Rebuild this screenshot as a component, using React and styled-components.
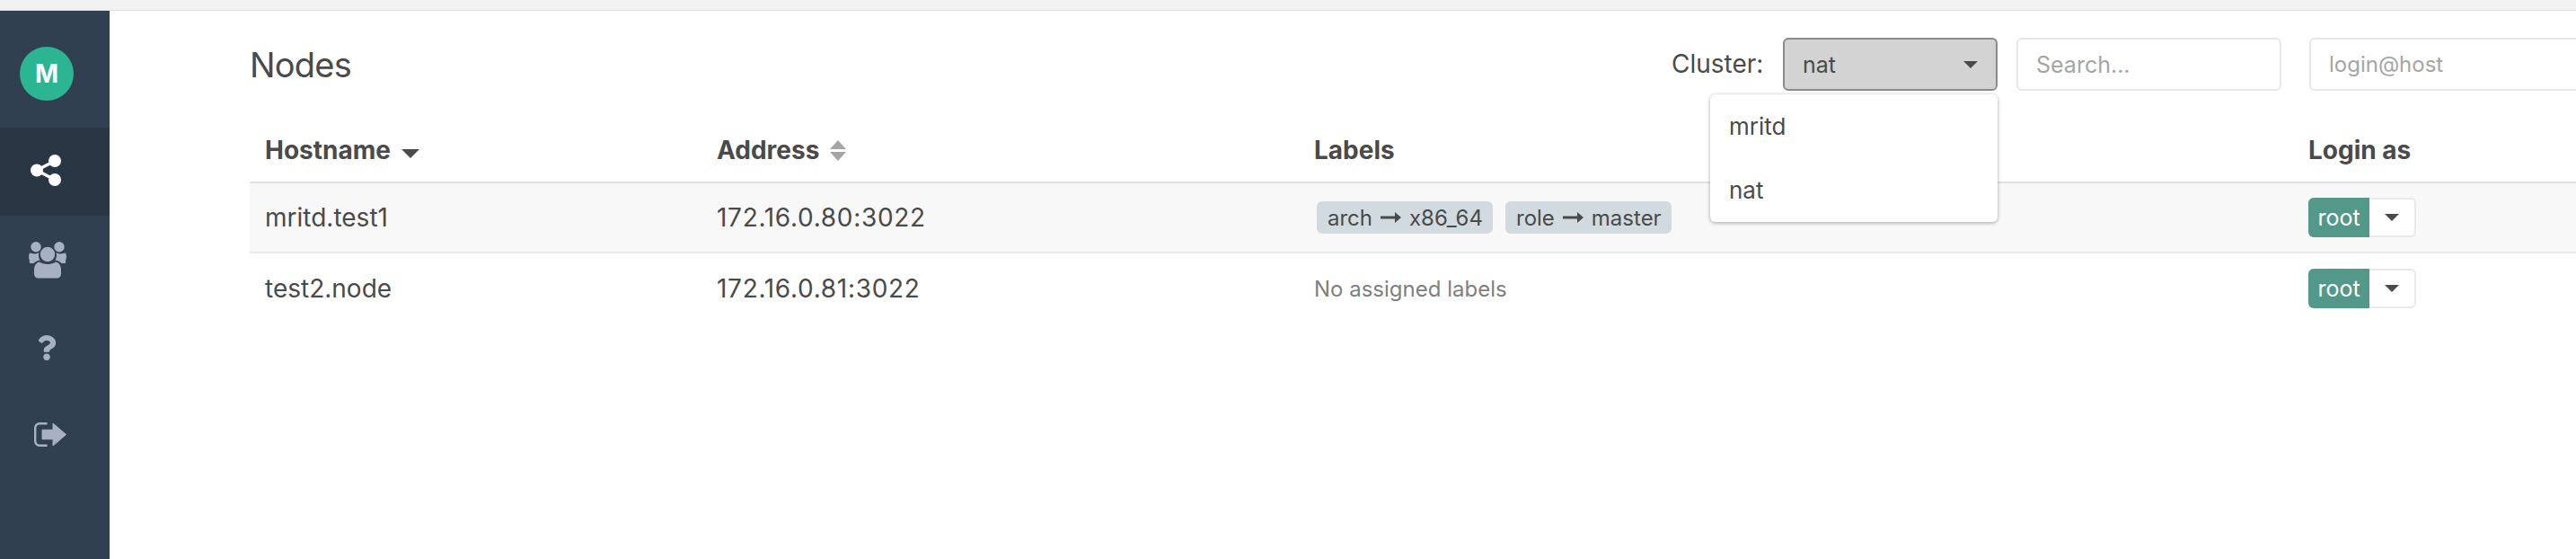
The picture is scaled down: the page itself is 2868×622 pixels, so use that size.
import React from 'react';
import styled, { createGlobalStyle } from 'styled-components';
import { FaQuestion } from 'react-icons/fa';

const Global = createGlobalStyle`
  html, body { margin: 0; padding: 0; background: #fff; }
  body { font-family: Inter, "Liberation Sans", sans-serif; color: #4a4a4a; overflow: hidden; }
  * { box-sizing: border-box; }
`;
const Page = styled.div`width: 2868px; height: 622px; display: flex; flex-direction: column; overflow: hidden;`;
const TopStrip = styled.div`height: 12px; flex: none; background: #f2f2f2; border-bottom: 1px solid #dcdcdc;`;
const Body = styled.div`flex: 1; display: flex; min-height: 0;`;
const Sidebar = styled.nav`width: 122px; flex: none; background: #304050;`;
const AvatarBox = styled.div`height: 130px; padding: 40px 0 0 22px;`;
const Avatar = styled.div`
  width: 60px; height: 60px; border-radius: 50%; background: #2bb593; color: #fff;
  display: flex; align-items: center; justify-content: center; font-weight: 700; font-size: 28px;
`;
const NavItem = styled.div`
  height: 98px; padding-left: 22px; display: flex; align-items: center;
  background: ${p => (p.$active ? '#293745' : 'transparent')};
  color: ${p => (p.$active ? '#fff' : '#a7b1c2')};
`;
const IconSlot = styled.div`
  width: ${p => p.$w || 60}px; margin-bottom: ${p => p.$up || 0}px;
  display: flex; justify-content: center;
`;
const Main = styled.main`flex: 1; min-width: 0; padding: 30px 0 0 156px;`;
const Header = styled.header`display: flex; align-items: flex-start; height: 90px;`;
const Title = styled.h1`margin: 7px 0 0; font-size: 38px; line-height: 46px; font-weight: 400; letter-spacing: -0.8px; flex: none; width: 1583px;`;
const ClusterLabel = styled.span`font-size: 28px; line-height: 59px; width: 124px; flex: none;`;
const ClusterWrap = styled.div`position: relative; flex: none; width: 239px; margin-right: 21px;`;
const Select = styled.div`
  height: 59px; background: #d3d3d3; border: 2px solid #8b8b8b; border-radius: 6px;
  display: flex; align-items: center; justify-content: space-between; padding: 0 20px 0 20px; font-size: 25px;
`;
const Caret = styled.i`
  display: inline-block; width: 0; height: 0;
  border-left: ${p => p.$s}px solid transparent; border-right: ${p => p.$s}px solid transparent;
  border-top: ${p => p.$s}px solid ${p => p.$c || '#4a4a4a'};
`;
const Menu = styled.div`
  position: absolute; top: 63px; right: 0; width: 320px; height: 142px; background: #fff;
  border-radius: 6px; box-shadow: 0 1px 4px rgba(0,0,0,.35); padding-left: 21px; z-index: 2;
  font-size: 26px;
`;
const MenuItem = styled.div`height: 71px; display: flex; align-items: center;`;
const Input = styled.div`
  flex: none; width: ${p => p.$w}px; height: 59px; margin-right: ${p => p.$mr || 0}px;
  border: 2px solid #e7e7e7; border-radius: 6px; padding-left: 20px; display: flex; align-items: center;
  font-size: ${p => p.$fs || 25}px; color: #a5a5a5; background: #fff;
`;
const Row = styled.div`
  display: grid; grid-template-columns: 503px 665px 1107px 1fr; align-items: center;
  height: ${p => p.$h}px; background: ${p => p.$bg || 'transparent'};
  border-bottom: ${p => (p.$line ? `2px solid ${p.$line}` : 'none')};
`;
const Th = styled.div`padding-left: 17px; font-size: 28px; font-weight: 700; display: flex; align-items: center; gap: 12px;`;
const Td = styled.div`padding-left: 17px; font-size: 28px; letter-spacing: ${p => (p.$num ? '0.7px' : '0')}; display: flex; align-items: center; gap: 14px;`;
const Chip = styled.span`
  height: 36px; border-radius: 6px; background: #d1dade; padding: 0 11px 0 12px;
  display: inline-flex; align-items: center; gap: 9px; font-size: 24px;
  margin-left: 3px; & + & { margin-left: 0; }
`;
const Muted = styled.span`font-size: 24px; color: #7f7f7f;`;
const LoginGroup = styled.div`display: flex; height: 44px;`;
const RootBtn = styled.div`
  width: 68px; background: #52998a; color: #fff; font-size: 25px; font-weight: 400;
  border-radius: 6px 0 0 6px; display: flex; align-items: center; justify-content: center;
`;
const DropBtn = styled.div`
  width: 52px; background: #fff; border: 2px solid #e7eaec; border-left: 0;
  border-radius: 0 6px 6px 0; display: flex; align-items: center; justify-content: center;
`;
const SortIcon = styled.svg`display: block; margin-top: ${p => p.$mt || 0}px;`;

const Share = () => (
  <svg width="34" height="35" viewBox="0 0 34 35" fill="currentColor">
    <path d="M7 17.500L27 7M7 17.500L27 28" stroke="currentColor" strokeWidth="3.500" fill="none" />
    <circle cx="7" cy="17.500" r="7" /><circle cx="27" cy="7" r="7" /><circle cx="27" cy="28" r="7" />
  </svg>
);
const Shoulder = 'M1 21C0 19-.5 15 1 12.500C3 12.500 5 13.500 7 13.500C9 13.500 10 12.500 11.500 12C10.500 15 11 18 12.500 20.500C9 21 6.500 23 5.500 24H3A2 2 0 0 1 1 21z';
const Users = () => (
  <svg width="43" height="41" viewBox="0 0 43 41" fill="currentColor">
    <circle cx="8" cy="5.700" r="5.700" /><circle cx="34" cy="5.700" r="5.700" />
    <path d={Shoulder} />
    <path d={Shoulder} transform="matrix(-1 0 0 1 42 0)" />
    <circle cx="21" cy="14" r="8.800" stroke="#304050" strokeWidth="1.200" />
    <path d="M6 36V31C6 26 9 23 12 22.500C14 24 17.500 25 21 25C24.500 25 28 24 30 22.500C33 23 36 26 36 31V36A4.500 4.500 0 0 1 31.500 40.500H10.500A4.500 4.500 0 0 1 6 36z" />
  </svg>
);
const SignOut = () => (
  <svg width="36" height="27" viewBox="0 0 36 27" fill="currentColor">
    <path d="M14.500 1.200H6A4.800 4.800 0 0 0 1.200 6V21A4.800 4.800 0 0 0 6 25.800H14.500" fill="none" stroke="currentColor" strokeWidth="2.400" />
    <path d="M9 8.300H21V1L35.500 13.500L21 26V18.700H9z" stroke="currentColor" strokeWidth="1" strokeLinejoin="round" />
  </svg>
);
const Arrow = () => (
  <svg width="23" height="12" viewBox="0 0 23 12" fill="#4a4a4a"><path d="M0 4.500h16V0l7 6-7 6V7.500H0z" /></svg>
);
const SortBoth = () => (
  <SortIcon width="18" height="23" viewBox="0 0 18 23" fill="#a5a5a5"><path d="M9 0l9 10H0zM0 13h18l-9 10z" /></SortIcon>
);

const LoginAs = () => (
  <LoginGroup>
    <RootBtn>root</RootBtn>
    <DropBtn><Caret $s={8} /></DropBtn>
  </LoginGroup>
);

export default function App() {
  return (
    <Page>
      <Global />
      <TopStrip />
      <Body>
        <Sidebar>
          <AvatarBox><Avatar>M</Avatar></AvatarBox>
          <NavItem $active><IconSlot $w={58} $up={3}><Share /></IconSlot></NavItem>
          <NavItem><IconSlot $w={63}><Users /></IconSlot></NavItem>
          <NavItem><IconSlot $w={59}><FaQuestion size={28} /></IconSlot></NavItem>
          <NavItem><IconSlot $w={68} $up={3}><SignOut /></IconSlot></NavItem>
        </Sidebar>
        <Main>
          <Header>
            <Title>Nodes</Title>
            <ClusterLabel>Cluster:</ClusterLabel>
            <ClusterWrap>
              <Select>nat<Caret $s={8} /></Select>
              <Menu>
                <MenuItem>mritd</MenuItem>
                <MenuItem>nat</MenuItem>
              </Menu>
            </ClusterWrap>
            <Input $w={295} $mr={31}>Search...</Input>
            <Input $w={400} $fs={24}>login@host</Input>
          </Header>
          <Row $h={72} $line="#e0e0e0">
            <Th>Hostname <SortIcon $mt={8} width="20" height="10" viewBox="0 0 20 10" fill="#4a4a4a"><path d="M0 0h20L10 10z" /></SortIcon></Th>
            <Th>Address <SortBoth /></Th>
            <Th>Labels</Th>
            <Th>Login as</Th>
          </Row>
          <Row $h={78} $bg="#f8f8f8" $line="#e7eaec">
            <Td>mritd.test1</Td>
            <Td $num>172.16.0.80:3022</Td>
            <Td>
              <Chip>arch <Arrow /> x86_64</Chip>
              <Chip>role <Arrow /> master</Chip>
            </Td>
            <Td><LoginAs /></Td>
          </Row>
          <Row $h={78}>
            <Td>test2.node</Td>
            <Td $num>172.16.0.81:3022</Td>
            <Td><Muted>No assigned labels</Muted></Td>
            <Td><LoginAs /></Td>
          </Row>
        </Main>
      </Body>
    </Page>
  );
}
